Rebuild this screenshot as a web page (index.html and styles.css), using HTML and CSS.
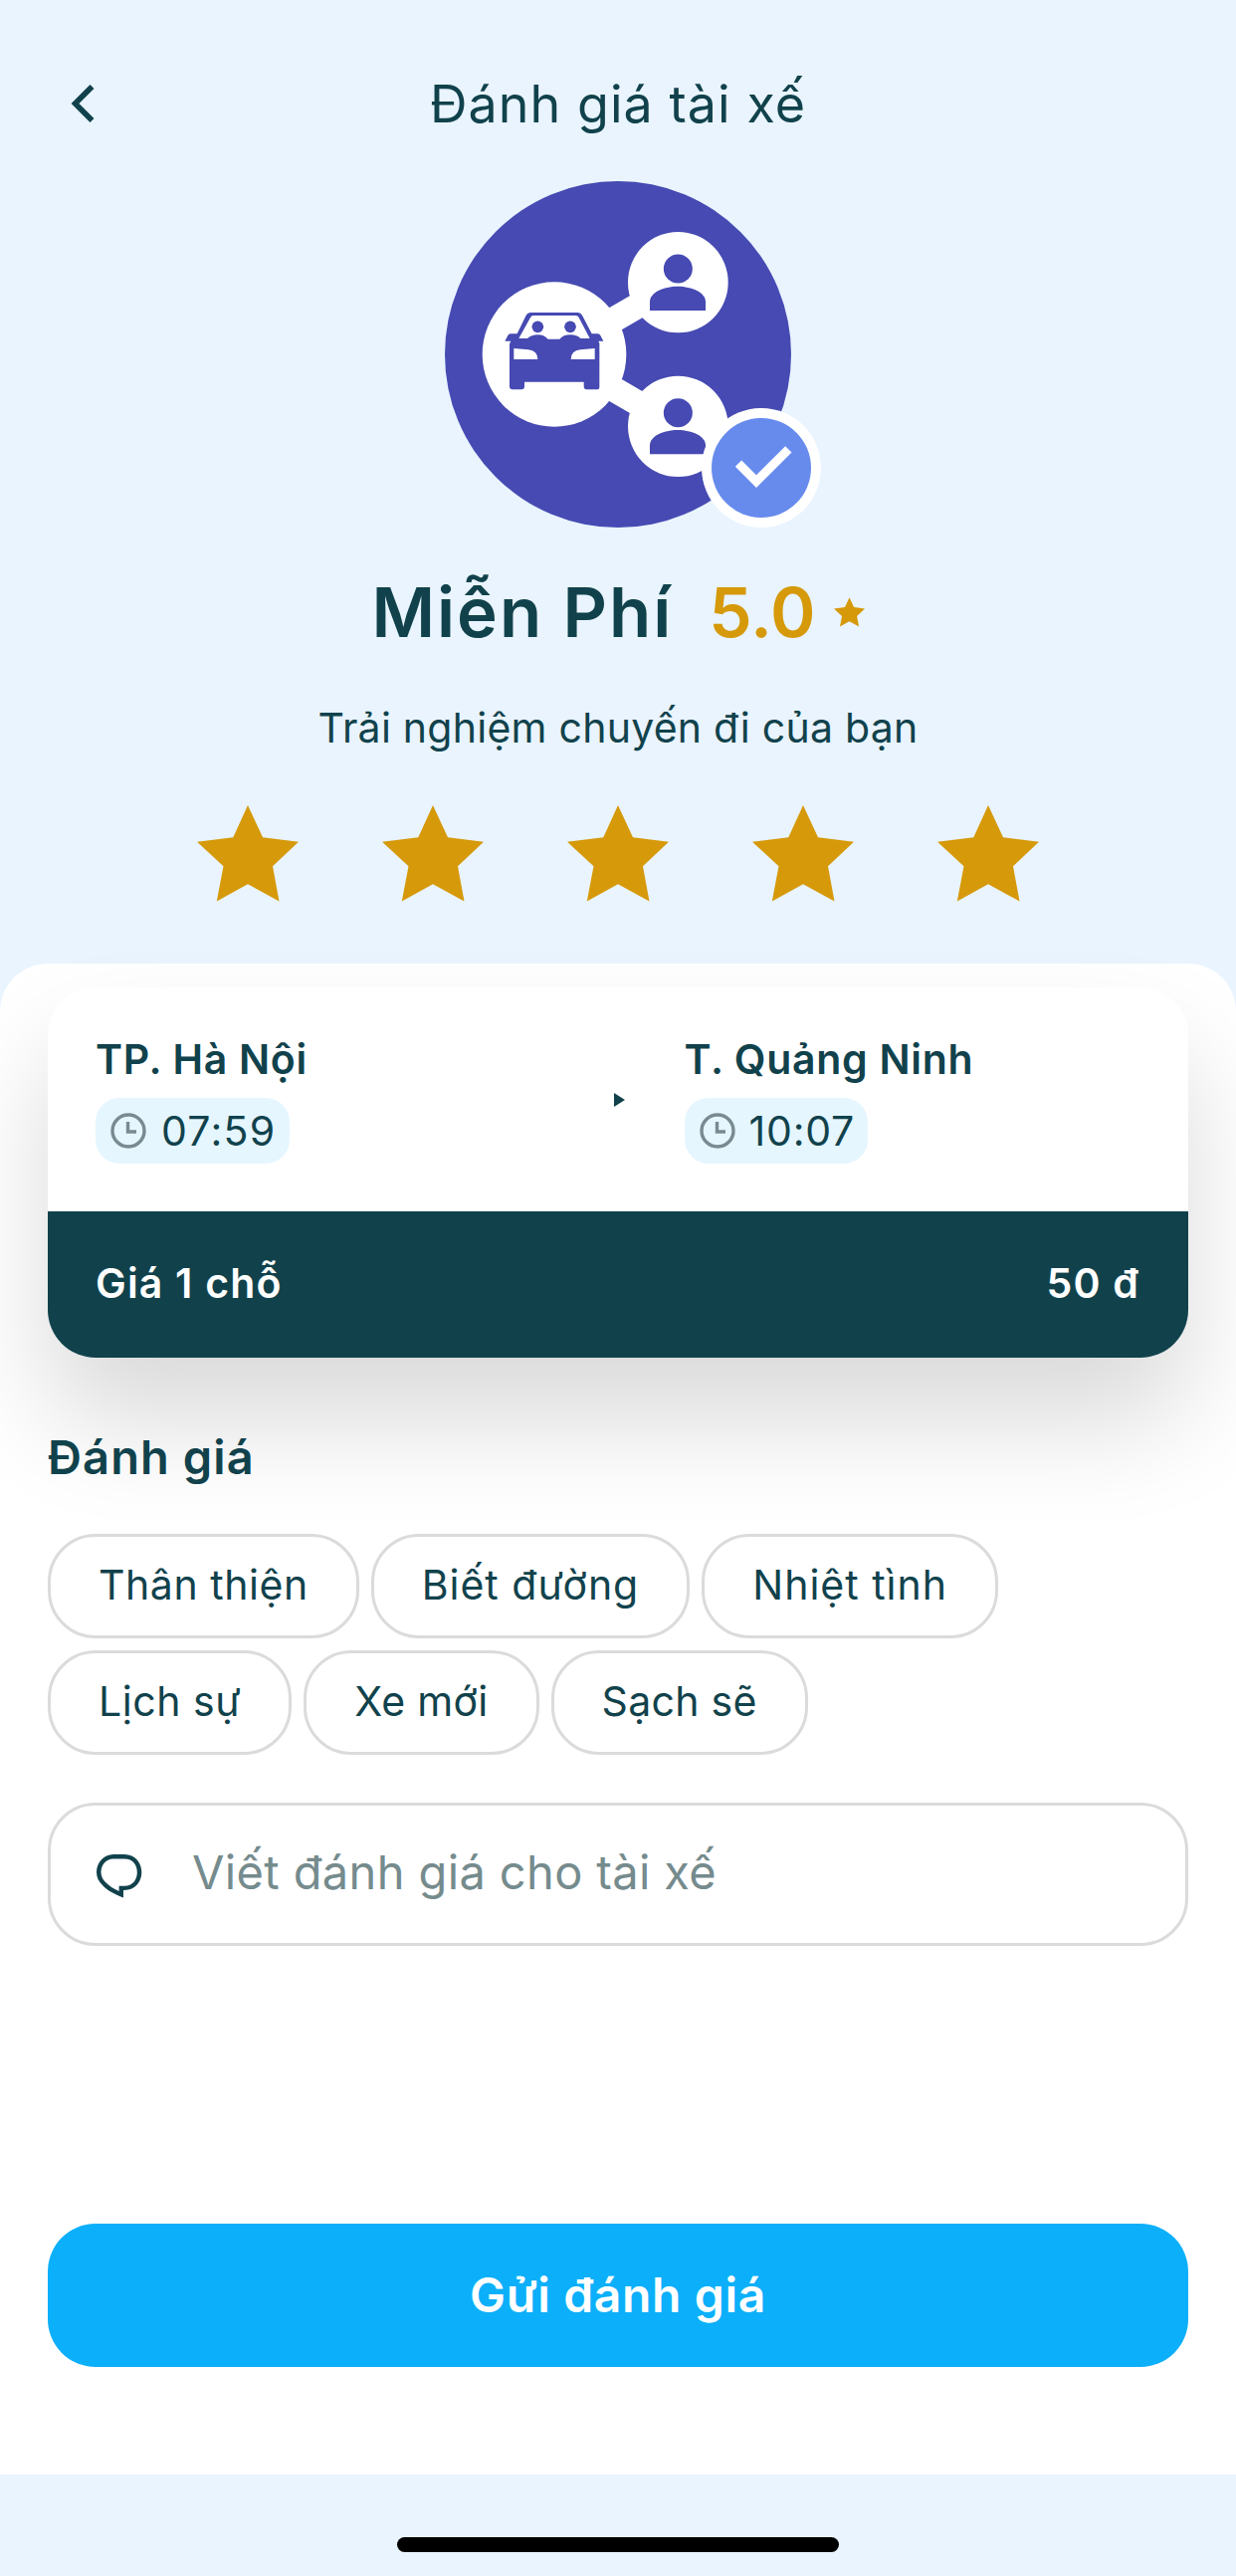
FILE: index.html
```html
<!DOCTYPE html>
<html lang="vi">
<head>
<meta charset="utf-8">
<title>Đánh giá tài xế</title>
<link rel="stylesheet" href="styles.css">
</head>
<body>
<main class="screen">
  <header class="topbar">
    <svg class="back" viewBox="0 0 24 38"><path d="M21.500 2 4.500 19l17 17" fill="none" stroke="#11424c" stroke-width="5.600"/></svg>
    <h1 class="title">Đánh giá tài xế</h1>
  </header>

  <section class="driver">
    <svg class="avatar" viewBox="51 36 1044 1044">
      <circle cx="573" cy="558" r="522" fill="#464ab2"/>
      <path d="M380 558 753 342M380 558l373 217" stroke="#fff" stroke-width="76"/>
      <ellipse cx="381" cy="558" rx="217" ry="218" fill="#fff"/>
      <ellipse cx="754" cy="341" rx="151" ry="152" fill="#fff"/>
      <ellipse cx="754" cy="775" rx="151" ry="152" fill="#fff"/>
      <g fill="#464ab2">
        <circle cx="754" cy="300" r="43.500"/>
        <path d="M669 426v-27c0-27 41-46 84-46s84 19 84 46v27z"/>
        <circle cx="754" cy="734" r="43.500"/>
        <path d="M669 859v-27c0-27 41-46 84-46s84 19 84 46v27z"/>
        <circle cx="331" cy="475" r="17.500"/>
        <circle cx="429" cy="475" r="17.500"/>
        <path fill-rule="evenodd" d="M232 518l9-17q2-5 8-5h20l27-56q4-8 13-8h143q9 0 13 8l29 56h18q6 0 8 5l9 17h-15q4 5 3 12v126q0 8-8 8h-30q-9 0-9-9v-14H291v14q0 9-9 9h-27q-9 0-9-9V530q0-7 4-12zM274 510L309 447Q312 441 318 441H446Q452 441 455 447L488 510H460Q450 499 429 499Q408 499 397 512H362Q350 499 331 499Q312 499 300 510ZM259 540l44 4q28 4 28 29h-72zM503 540l-44 4q-28 4-28 29h72z"/>
      </g>
      <circle cx="1005" cy="900" r="180" fill="#fff"/>
      <circle cx="1005" cy="900" r="150" fill="#678bed"/>
      <path d="m936 887 54 54 97-97" fill="none" stroke="#fff" stroke-width="27"/>
    </svg>
    <div class="who">
      <span class="name">Miễn Phí</span>
      <span class="score">5.0</span>
      <svg class="mini-star" viewBox="0 0 102 97"><use href="#star"/></svg>
    </div>
    <p class="prompt">Trải nghiệm chuyến đi của bạn</p>
    <div class="stars">
      <svg viewBox="0 0 102 97"><path id="star" fill="#d6990a" d="M51 0 66 32.300 102 36.700 76 61.300 82.500 96.500 51 79.300 19.800 96.500 26.500 61.300 0 36.700 36.300 32.300z"/></svg>
      <svg viewBox="0 0 102 97"><use href="#star"/></svg>
      <svg viewBox="0 0 102 97"><use href="#star"/></svg>
      <svg viewBox="0 0 102 97"><use href="#star"/></svg>
      <svg viewBox="0 0 102 97"><use href="#star"/></svg>
    </div>
  </section>

  <section class="sheet">
    <article class="trip">
      <div class="route">
        <div class="stop">
          <span class="place">TP. Hà Nội</span>
          <div class="time"><svg class="clock" viewBox="0 0 36 36"><g id="clock" fill="none" stroke="#788b90"><circle cx="18" cy="18" r="16" stroke-width="3.400"/><path d="M17.500 9v10h8.500" stroke-width="3.400"/></g></svg><span>07:59</span></div>
        </div>
        <svg class="arrow" viewBox="0 0 11 14"><path d="M0 0 11 7 0 14z" fill="#11424c"/></svg>
        <div class="stop arrival">
          <span class="place">T. Quảng Ninh</span>
          <div class="time"><svg class="clock" viewBox="0 0 36 36"><use href="#clock"/></svg><span>10:07</span></div>
        </div>
      </div>
      <div class="price"><span>Giá 1 chỗ</span><span>50 đ</span></div>
    </article>

    <h2 class="heading">Đánh giá</h2>
    <div class="tags">
      <button class="tag">Thân thiện</button>
      <button class="tag wide">Biết đường</button>
      <button class="tag wide">Nhiệt tình</button>
      <button class="tag">Lịch sự</button>
      <button class="tag tight">Xe mới</button>
      <button class="tag tight">Sạch sẽ</button>
    </div>
    <div class="comment">
      <svg class="bubble" viewBox="0 0 46 44"><path fill="#11424c" fill-rule="evenodd" d="M17 0h11c11 0 17.300 8.500 17.300 18S39 36 28 36h-1v7.500C18 40 10 36 6 31 2 27 0 23 0 18 0 8.500 7 0 17 0zM17 4.500C9 4.500 4.500 11 4.500 18c0 3.500 1.500 7 4.500 10 3.500 3.500 8 6.500 13.600 9v-5.200H28c8.500 0 12.800-6.500 12.800-13.800S36.500 4.500 28 4.500z"/></svg>
      <span class="hint">Viết đánh giá cho tài xế</span>
    </div>
    <button class="send">Gửi đánh giá</button>
  </section>
  <footer class="home"><div class="home-bar"></div></footer>
</main>
</body>
</html>
```
FILE: styles.css
```css
* { box-sizing: border-box; }
body, h1, h2, p { margin: 0; font-weight: 400; }
body { background: #e9f4fe; color: #11424c; font-family: Inter, "Noto Sans", sans-serif; }
svg { display: block; flex: none; overflow: visible; }
button { font: inherit; color: inherit; margin: 0; border: 0; padding: 0; }

.screen { width: 1242px; height: 2588px; display: flex; flex-direction: column; }

.topbar { display: grid; grid-template-columns: 72px 1fr 72px; align-items: center; height: 80px; margin-top: 65px; }
.back { width: 24px; height: 38px; margin-left: 71px; margin-top: -3px; }
.title { text-align: center; font-size: 52px; line-height: 80px; letter-spacing: 1.05px; }

.driver { display: flex; flex-direction: column; align-items: center; padding-top: 37px; }
.avatar { width: 348px; height: 348px; }
.who { display: flex; align-items: center; margin-top: 43px; height: 84px; line-height: 84px; font-size: 69px; font-weight: 600; }
.name { letter-spacing: 2px; }
.score { color: #d6990a; margin-left: 36px; }
.mini-star { width: 31px; height: 30px; margin-left: 18px; }
.prompt { margin-top: 44px; font-size: 41px; line-height: 60px; letter-spacing: .25px; }
.stars { display: flex; gap: 84px; margin-top: 48px; }
.stars svg { width: 102px; height: 97px; }

.sheet { margin-top: 62px; height: 1518px; padding: 24px 48px 0; background: #fff; border-radius: 48px 48px 0 0; display: flex; flex-direction: column; }
.trip { height: 372px; border-radius: 48px; background: #fff; box-shadow: 0 64px 108px rgba(0, 0, 0, .15); overflow: hidden; font-size: 41px; }
.route { height: 225px; padding: 44px 48px 0; display: grid; grid-template-columns: 521px 11px 1fr; }
.stop { display: flex; flex-direction: column; align-items: flex-start; }
.arrival { padding-left: 59.5px; }
.place { font-weight: 600; line-height: 56px; letter-spacing: .7px; }
.time { display: flex; align-items: center; height: 66px; margin-top: 11px; padding: 0 13px 0 15px; border-radius: 24px; background: #e5f6ff; letter-spacing: 1.3px; }
.arrival .time { letter-spacing: .8px; }
.clock { width: 36px; height: 36px; margin-right: 15px; }
.arrival .clock { margin-right: 14px; }
.arrow { width: 11px; height: 14px; margin-top: 62px; }
.price { height: 147px; padding: 0 49px 3px 48px; display: flex; align-items: center; justify-content: space-between; background: #11424c; color: #fff; font-weight: 600; letter-spacing: 1.2px; }

.heading { margin-top: 70px; font-size: 47px; line-height: 60px; font-weight: 600; letter-spacing: 1.1px; }
.tags { display: flex; flex-wrap: wrap; gap: 12px; margin-top: 47px; }
.tag { height: 105px; padding: 0 48px 3px; border: 3px solid #dbdbdb; border-radius: 48px; background: transparent; font-size: 41px; letter-spacing: .55px; }
.tag.wide { letter-spacing: 1px; }
.tag.tight { letter-spacing: .3px; }
.comment { margin-top: 48px; height: 144px; border: 3px solid #dbdbdb; border-radius: 48px; padding-left: 46px; display: flex; align-items: center; font-size: 47px; color: #758b8d; }
.bubble { width: 46px; height: 44px; margin: 3px 50px 0 0; }
.hint { padding-bottom: 6px; letter-spacing: .37px; }
.send { margin-top: 279px; height: 144px; padding-bottom: 2px; border-radius: 48px; background: #0caffa; color: #fff; font-size: 48px; font-weight: 600; letter-spacing: .65px; }

.home { flex: 1; display: flex; justify-content: center; padding-top: 63px; }
.home-bar { width: 444px; height: 15px; border-radius: 8px; background: #000; }
```
